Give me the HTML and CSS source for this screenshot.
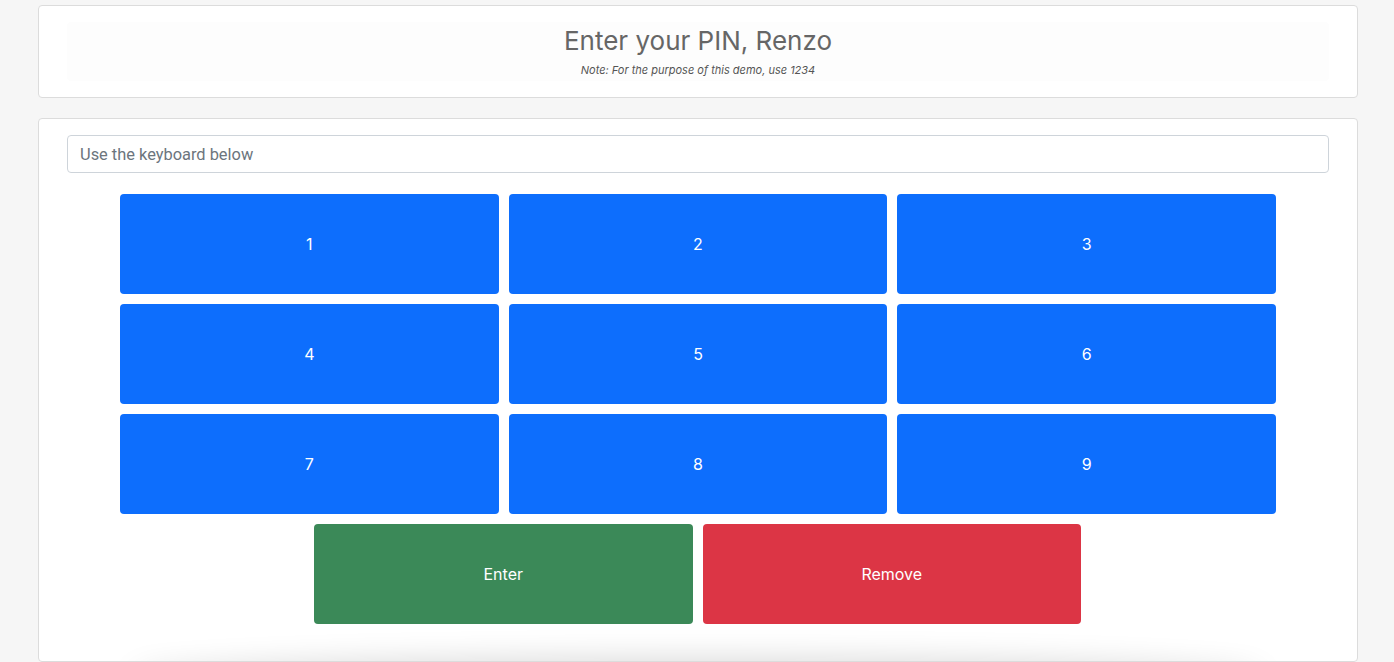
FILE: index.html
```html
<!DOCTYPE html>
<html>
<head>
<meta charset="utf-8">
<link rel="stylesheet" href="styles.css">
</head>
<body>
<div class="page">
  <div class="card header-card">
    <div class="header-inner">
      <h1 class="title">Enter your PIN, Renzo</h1>
      <p class="note">Note: For the purpose of this demo, use 1234</p>
    </div>
  </div>
  <div class="card pad-card">
    <input class="pin-input" type="text" placeholder="Use the keyboard below">
    <div class="keys">
      <button class="key blue">1</button>
      <button class="key blue">2</button>
      <button class="key blue">3</button>
      <button class="key blue">4</button>
      <button class="key blue">5</button>
      <button class="key blue">6</button>
      <button class="key blue">7</button>
      <button class="key blue">8</button>
      <button class="key blue">9</button>
    </div>
    <div class="actions">
      <button class="key green">Enter</button>
      <button class="key red">Remove</button>
    </div>
    <div class="shade"></div>
  </div>
</div>
</body>
</html>
```
FILE: styles.css
```css
html, body {
  margin: 0;
  padding: 0;
  background: #f6f6f6;
  font-family: Inter, Roboto, "Liberation Sans", sans-serif;
}
.page {
  padding: 5px 36px 0 38px;
  display: flex;
  flex-direction: column;
  gap: 20px;
}
.card {
  background: #fff;
  border: 1px solid #dcdcdc;
  border-radius: 4px;
  box-sizing: border-box;
}
.header-card {
  padding: 16px 28px;
  height: 93px;
}
.header-inner {
  background: #fdfdfd;
  border-radius: 4px;
  height: 59px;
  display: flex;
  flex-direction: column;
  align-items: center;
  padding-top: 3px;
  box-sizing: border-box;
}
.title {
  margin: 0;
  font-size: 26px;
  font-weight: 400;
  color: #666;
  line-height: 32px;
}
.note {
  margin: 6px 0 0;
  font-size: 11px;
  font-style: italic;
  color: #555;
  line-height: 14px;
}
.pad-card {
  position: relative;
  overflow: hidden;
  padding: 16px 28px 37px;
  height: 544px;
}
.pin-input {
  display: block;
  width: 100%;
  box-sizing: border-box;
  height: 38px;
  border: 1px solid #ced4da;
  border-radius: 4px;
  padding: 6px 12px;
  font-family: Roboto, "Liberation Sans", sans-serif;
  font-size: 16.4px;
  color: #212529;
}
.pin-input::placeholder {
  color: #6c757d;
}
.keys {
  width: 1156px;
  margin: 21px 0 0 53px;
  display: grid;
  grid-template-columns: repeat(3, 1fr);
  gap: 10px;
}
.actions {
  width: 767px;
  margin: 10px 0 0 247px;
  display: grid;
  grid-template-columns: repeat(2, 1fr);
  gap: 10px;
}
.key {
  height: 100px;
  border: none;
  border-radius: 4px;
  color: #fff;
  font-family: inherit;
  font-size: 16px;
  padding: 0;
}
.blue { background: #0d6efd; }
.green { background: #3b8958; }
.red { background: #dc3545; }
.shade {
  position: absolute;
  left: 90px;
  right: 90px;
  top: 100%;
  height: 40px;
  box-shadow: 0 -4px 30px rgba(0,0,0,0.14);
  border-radius: 50%;
}
```
